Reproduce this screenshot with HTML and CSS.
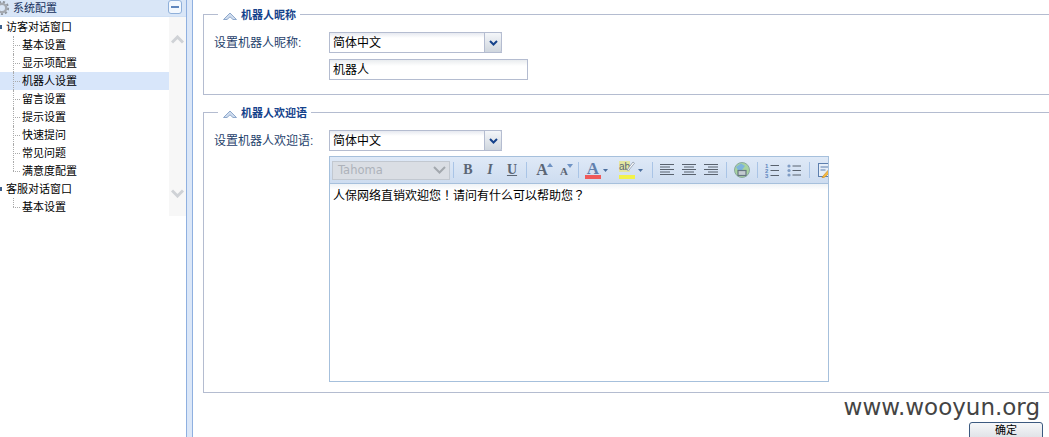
FILE: index.html
```html
<!DOCTYPE html>
<html lang="zh">
<head>
<meta charset="utf-8">
<title>系统配置</title>
<link rel="stylesheet" href="styles.css">
</head>
<body>
<div class="page">
  <aside class="side">
    <div class="side-head">
      <svg class="gear" width="10" height="14" viewBox="0 0 10 14"><circle cx="2" cy="7" r="4.200" fill="none" stroke="#a4a9b0" stroke-width="2.400"/><circle cx="2" cy="7" r="6.200" fill="none" stroke="#8f959e" stroke-width="1.800" stroke-dasharray="2.200 2"/></svg>
      <span class="side-title">系统配置</span>
      <span class="collapse"><i></i></span>
    </div>
    <div class="tree-wrap">
      <div class="tree">
        <div class="node root"><i class="bullet"></i>访客对话窗口</div>
        <div class="group">
          <div class="node">基本设置</div>
          <div class="node">显示项配置</div>
          <div class="node active">机器人设置</div>
          <div class="node">留言设置</div>
          <div class="node">提示设置</div>
          <div class="node">快速提问</div>
          <div class="node">常见问题</div>
          <div class="node">满意度配置</div>
        </div>
        <div class="node root second-root"><i class="bullet"></i>客服对话窗口</div>
        <div class="group">
          <div class="node">基本设置</div>
        </div>
      </div>
      <div class="scroll">
        <svg width="13" height="9" viewBox="0 0 13 9"><path d="M1 7.500 6.500 2l5.500 5.500" fill="none" stroke="#cfd2d6" stroke-width="3"/></svg>
        <svg width="13" height="9" viewBox="0 0 13 9"><path d="M1 1.500 6.500 7 12 1.500" fill="none" stroke="#cfd2d6" stroke-width="3"/></svg>
      </div>
    </div>
  </aside>
  <div class="splitter"></div>
  <main class="main">
    <section class="field first">
      <h2 class="legend"><svg class="chev" width="14" height="8" viewBox="0 0 14 8"><path d="M.5 7.500 7 1l6.500 6.500H10L7 4.800 4 7.500Z" fill="#cfdcee" stroke="#8fa9cc" stroke-width="1"/></svg>机器人昵称</h2>
      <div class="row">
        <label class="lab">设置机器人昵称:</label>
        <div class="ctl">
          <div class="combo"><span class="combo-text">简体中文</span><span class="combo-btn"><svg width="9" height="6" viewBox="0 0 9 6"><path d="M1 1 4.500 4.500 8 1" fill="none" stroke="#15428b" stroke-width="2"/></svg></span></div>
          <div class="input">机器人</div>
        </div>
      </div>
    </section>
    <section class="field second">
      <h2 class="legend"><svg class="chev" width="14" height="8" viewBox="0 0 14 8"><path d="M.5 7.500 7 1l6.500 6.500H10L7 4.800 4 7.500Z" fill="#cfdcee" stroke="#8fa9cc" stroke-width="1"/></svg>机器人欢迎语</h2>
      <div class="row">
        <label class="lab">设置机器人欢迎语:</label>
        <div class="ctl">
          <div class="combo"><span class="combo-text">简体中文</span><span class="combo-btn"><svg width="9" height="6" viewBox="0 0 9 6"><path d="M1 1 4.500 4.500 8 1" fill="none" stroke="#15428b" stroke-width="2"/></svg></span></div>
          <div class="editor">
            <div class="toolbar">
              <div class="font-select"><span>Tahoma</span><svg width="13" height="8" viewBox="0 0 13 8"><path d="M1 1 6.500 6.500 12 1" fill="none" stroke="#a3a8ae" stroke-width="2"/></svg></div>
              <i class="sep"></i>
              <span class="tb b">B</span>
              <span class="tb it">I</span>
              <span class="tb u">U</span>
              <i class="sep"></i>
              <span class="tb a-big">A<svg width="6" height="4" viewBox="0 0 6 4"><path d="M0 4 3 0l3 4Z" fill="#6f93c4"/></svg></span>
              <span class="tb a-small">A<svg width="6" height="4" viewBox="0 0 6 4"><path d="M0 0h6L3 4Z" fill="#6f93c4"/></svg></span>
              <i class="sep"></i>
              <span class="tb color">A<em class="red"></em></span><svg class="drop" width="5" height="3" viewBox="0 0 5 3"><path d="M0 0h5L2.500 3Z" fill="#4b6f9f"/></svg>
              <span class="tb hl"><small>ab</small><svg width="9" height="10" viewBox="0 0 9 10"><path d="M1 9 7 1l1.500 1.200L2.500 9.500Z" fill="#fff" stroke="#8a97a8" stroke-width=".8"/></svg><em class="yellow"></em></span><svg class="drop" width="5" height="3" viewBox="0 0 5 3"><path d="M0 0h5L2.500 3Z" fill="#4b6f9f"/></svg>
              <i class="sep sep-align"></i>
              <svg class="ico" width="14" height="12" viewBox="0 0 14 12"><path d="M0 .5h14M0 3h10M0 5.500h14M0 8h10M0 10.500h14" stroke="#59626e"/></svg>
              <svg class="ico" width="14" height="12" viewBox="0 0 14 12"><path d="M0 .5h14M2 3h10M0 5.500h14M2 8h10M0 10.500h14" stroke="#59626e"/></svg>
              <svg class="ico" width="14" height="12" viewBox="0 0 14 12"><path d="M0 .5h14M4 3h10M0 5.500h14M4 8h10M0 10.500h14" stroke="#59626e"/></svg>
              <i class="sep sep-after"></i>
              <svg class="globe" width="16" height="16" viewBox="0 0 16 16"><circle cx="8" cy="8" r="7.500" fill="#a8d4a0" stroke="#8aa8a0"/><path d="M2 5 7 1.500 11 4 8 8 4 8Z" fill="#7fb4dc"/><rect x="4" y="8.500" width="8" height="5" fill="#c4cbd0" stroke="#667680" stroke-width="1.200"/></svg>
              <i class="sep sep-after"></i>
              <svg class="ico" width="14" height="15" viewBox="0 0 14 15"><g class="nums"><text x="0" y="5">1</text><text x="0" y="10">2</text><text x="0" y="15">3</text></g><path d="M5.500 2.500H14M5.500 7.500H14M5.500 12.500H14" stroke="#59626e"/></svg>
              <svg class="ico" width="14" height="13" viewBox="0 0 14 13"><circle cx="2" cy="2" r="1.600" fill="#7f9cc4"/><circle cx="2" cy="6.500" r="1.600" fill="#7f9cc4"/><circle cx="2" cy="11" r="1.600" fill="#7f9cc4"/><path d="M5.500 2H14M5.500 6.500H14M5.500 11H14" stroke="#59626e"/></svg>
              <i class="sep sep-after"></i>
              <svg class="pen" width="16" height="15" viewBox="0 0 16 15"><rect x=".5" y=".5" width="13" height="13" fill="#e6eef8" stroke="#5d7fae"/><path d="M2.500 4h9M2.500 7h5" stroke="#5d7fae"/><path d="M5 13 13 4l2 2-8 8-3 1Z" fill="#f4b942" stroke="#c98a20" stroke-width=".6"/></svg>
            </div>
            <div class="edit-body" lang="zh-TW">人保网络直销欢迎您！请问有什么可以帮助您？</div>
          </div>
        </div>
      </div>
    </section>
    <div class="actions">
      <span class="mark">www.wooyun.org</span>
      <button class="ok" type="button">确定</button>
    </div>
  </main>
</div>
</body>
</html>
```
FILE: styles.css
```css
* { box-sizing: border-box; }
html, body { margin: 0; height: 100%; overflow: hidden; background: #fff; }
body { font: 12px/18px "Liberation Sans", "Noto Sans CJK SC", sans-serif; color: #000; }
.page { display: flex; height: 437px; width: 1049px; }

.side { width: 186px; flex: none; display: flex; flex-direction: column; }
.side-head { height: 17px; background: #d9e6f7; display: flex; align-items: center; border-bottom: 1px solid #cfe0f5; }
.gear { margin-right: 3px; flex: none; }
.side-title { color: #15305c; flex: 1; font-size: 11px; }
.collapse { width: 14px; height: 14px; margin: -2px 4px 0 0; border: 1px solid #8fb0da; border-radius: 3px; background: #f3f8fe; display: flex; align-items: center; justify-content: center; }
.collapse i { display: block; width: 8px; height: 2px; background: #5f86bd; }

.tree-wrap { display: flex; height: 199px; }
.tree { width: 169px; flex: none; padding-top: 1px; font-size: 11px; }
.scroll { flex: 1; background: #f7f7f7; display: flex; flex-direction: column; justify-content: space-between; align-items: center; padding: 18px 0 18px; }
.scroll svg { display: block; }
.node { height: 18px; line-height: 19px; padding-left: 22px; position: relative; }
.group .node::before { content: ""; position: absolute; left: 13px; top: 9px; width: 7px; border-top: 1px dotted #aaa; }
.group .node::after { content: ""; position: absolute; left: 13px; top: 0; height: 18px; border-left: 1px dotted #aaa; }
.group .node:last-child::after { height: 9px; }
.node.root { padding-left: 6px; }
.bullet { position: absolute; left: -2px; top: 7px; width: 4px; height: 4px; background: #3c5f8c; }
.active { background: #d8e6fa; }

.splitter { width: 7px; flex: none; background: #dbe7f8; border-left: 1px solid #8fb0e0; border-right: 1px solid #8fb0e0; }

.main { flex: 1; padding: 14px 0 0 10px; min-width: 0; }
.field { border: 1px solid #b4bcd0; border-right: 0; position: relative; }
.field.first { height: 81px; }
.field.second { height: 281px; margin-top: 17px; }
.legend { position: absolute; left: 14px; top: -8px; margin: 0; padding: 0 4px 0 5px; background: #fff; height: 17px; font-size: 11px; line-height: 17px; font-weight: bold; color: #15428b; display: flex; align-items: center; }
.chev { margin-right: 4px; }
.row { display: flex; padding-top: 17px; }
.lab { width: 125px; padding-left: 10px; color: #1f3f6c; line-height: 22px; flex: none; }
.ctl { display: flex; flex-direction: column; }
.combo { width: 173px; height: 21px; border: 1px solid #b4bcd0; border-right: 0; display: flex; background: linear-gradient(#e6e9f0, #fff 5px); }
.combo-text { flex: 1; padding-left: 3px; line-height: 21px; }
.combo-btn { width: 18px; height: 21px; margin-top: -1px; border: 1px solid #b4bcd0; border-radius: 0 2px 2px 0; background: linear-gradient(#f4f6f9, #cfd6de); display: flex; align-items: center; justify-content: center; }
.input { width: 199px; height: 21px; margin-top: 6px; border: 1px solid #b4bcd0; padding-left: 3px; line-height: 20px; background: linear-gradient(#e9ecef, #fff 6px); }

.editor { width: 500px; height: 226px; margin-top: 5px; border: 1px solid #a6c0dc; display: flex; flex-direction: column; }
.toolbar { height: 27px; flex: none; background: linear-gradient(#dfe9f7, #cddcf0); border-bottom: 1px solid #a6c0dc; display: flex; align-items: center; padding-left: 2px; overflow: hidden; }
.font-select { width: 118px; height: 19px; flex: none; background: #dadee4; border: 1px solid #c2c8d0; display: flex; align-items: center; justify-content: space-between; padding: 0 3px 0 5px; color: #adb2ba; font: 11.500px "DejaVu Sans", sans-serif; }
.sep { width: 1px; height: 16px; background: #a9c4e6; flex: none; margin: 0 3px; }
.sep-align { margin-right: 7px; }
.sep-after { margin: 0 7px 0 0; }
.tb { position: relative; flex: none; width: 22px; height: 18px; text-align: center; color: #5b6675; font: bold 14px/18px "Liberation Serif", serif; }
.it { font-style: italic; }
.u { text-decoration: underline; }
.a-big { font-size: 16px; margin-left: 1px; }
.a-small { font-size: 11px; line-height: 21px; }
.a-big svg { position: absolute; top: 2px; right: 0; }
.a-small svg { position: absolute; top: 3px; right: 2px; }
.color { color: #6180ad; font-size: 17px; line-height: 15px; width: 16px; margin-left: 3px; }
.red { position: absolute; left: 0; right: 0; bottom: 0; height: 4px; background: #ef5a5a; }
.yellow { position: absolute; left: 0; right: 0; bottom: 0; height: 4px; background: #f2f24a; }
.drop { flex: none; margin: 0 6px 0 3px; }
.color + .drop { margin: 0 11px 0 2px; }
.hl { width: 16px; font: 11px/11px "Liberation Sans", sans-serif; text-align: left; color: #5b6675; }
.hl small { font-size: 10px; background: #e4e6a0; }
.hl svg { position: absolute; right: 0; top: 0; }
.ico { flex: none; margin-right: 8px; }
.nums { font: bold 6px "Liberation Sans", sans-serif; fill: #5f86bd; }
.globe { flex: none; margin-right: 7px; }
.pen { flex: none; margin-left: 1px; }
.edit-body { flex: 1; background: linear-gradient(#eef2f6, #fff 6px); padding: 2px 3px; line-height: 18px; font-family: "Noto Sans CJK TC", "Liberation Sans", sans-serif; }

.actions { display: flex; flex-direction: column; align-items: flex-end; padding: 0 6px 0 0; }
.mark { font: 23px/28px "DejaVu Sans", sans-serif; color: #444; margin-right: 3px; }
.ok { width: 74px; height: 24px; flex: none; margin-top: 1px; padding: 0 0 8px; border: 1px solid #3c5a80; border-radius: 3px; background: linear-gradient(#f6f7f9, #d5d8de); font: 11px/14px "Liberation Sans", "Noto Sans CJK SC", sans-serif; color: #000; }
```
